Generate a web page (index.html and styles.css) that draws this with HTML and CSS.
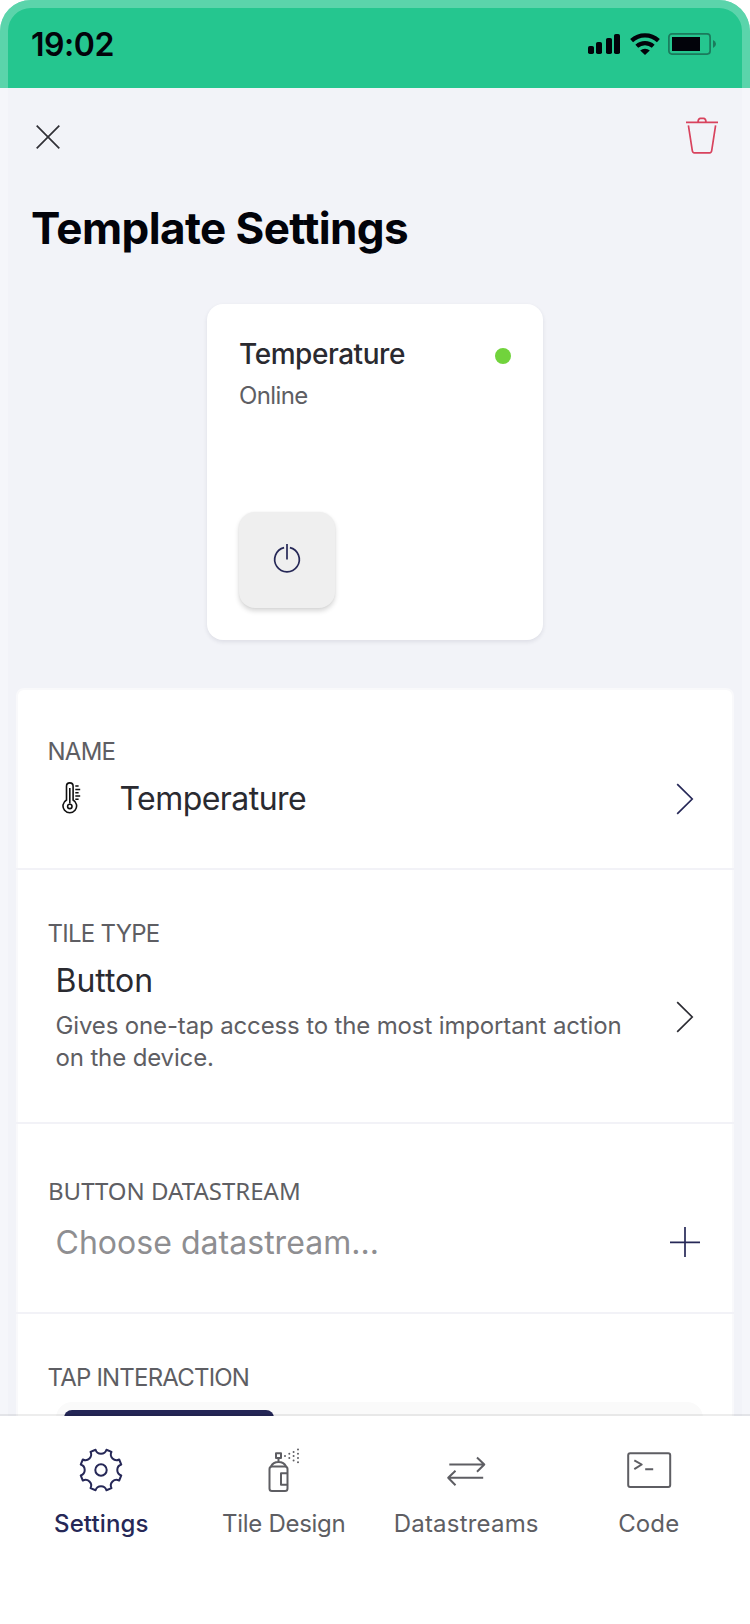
FILE: index.html
```html
<!DOCTYPE html>
<html lang="en">
<head>
<meta charset="utf-8">
<title>Template Settings</title>
<link rel="stylesheet" href="styles.css">
</head>
<body>
<div class="phone">
  <header class="status">
    <span class="time">19:02</span>
    <div class="status-icons">
      <svg width="32" height="24" viewBox="0 0 32 24"><rect y="14" width="6" height="8" rx="1.8"/><rect x="8" y="10" width="6" height="12" rx="1.8"/><rect x="18" y="6" width="6" height="16" rx="1.8"/><rect x="26" y="2" width="6" height="20" rx="1.8"/></svg>
      <svg class="wifi" width="30" height="24" viewBox="0 0 30 24"><path class="arc" d="M1.6 8.6A19.6 19.6 0 0 1 28.4 8.6M6.8 14.2A12.2 12.2 0 0 1 23.2 14.2"/><path d="M15 23L10.2 18.6A7 7 0 0 1 19.8 18.6Z"/></svg>
      <svg class="battery" width="48" height="24" viewBox="0 0 48 24"><rect class="shell" x=".9" y="1.9" width="41.2" height="20.2" rx="3"/><rect x="4" y="5" width="28" height="14"/><path class="nub" d="M45 8Q48 9.5 48 12T45 16Z"/></svg>
    </div>
  </header>

  <main class="content">
    <div class="toolbar">
      <svg class="close" width="24" height="24" viewBox="0 0 24 24"><path d="M.7 .7L23.3 23.3M23.3 .7L.7 23.3"/></svg>
      <svg class="trash" width="34" height="38" viewBox="0 0 34 38"><path d="M1 6.3H33M13 6.1Q13.2 2.3 15.4 2.3H18.6Q20.8 2.3 21 6.1M3.4 9.3L7.3 34.5Q7.6 36.9 9.4 36.9H24.6Q26.4 36.9 26.7 34.5L30.6 9.3"/></svg>
    </div>
    <h1 class="title">Template Settings</h1>

    <section class="tile">
      <div class="tile-head">
        <h2 class="tile-name">Temperature</h2>
        <span class="dot"></span>
      </div>
      <p class="tile-state">Online</p>
      <div class="power">
        <svg width="30" height="32" viewBox="0 0 30 32"><path d="M12.1 3.6A12.3 12.3 0 1 0 17.9 3.6M15 0V15.6"/></svg>
      </div>
    </section>

    <section class="list">
      <div class="row row-name">
        <div class="label">NAME</div>
        <div class="line">
          <svg class="thermo" width="20" height="34" viewBox="0 0 20 34"><path d="M4.5 18V4.2A3.3 3.3 0 0 1 11.1 4.2V18A6.8 6.8 0 1 1 4.5 18Z"/><path d="M7.8 6V21.5"/><circle cx="7.8" cy="24.4" r="2.2"/><path class="ticks" d="M13.3 4H16.6M13.3 7.5H18.2M13.3 10.8H16.6M13.3 14H18.2M13.3 17.3H16.6"/></svg>
          <span class="value">Temperature</span>
          <svg class="chevron navy" width="18" height="32" viewBox="0 0 18 32"><path d="M1.2 1.2L16.2 16L1.2 30.8"/></svg>
        </div>
      </div>
      <div class="row row-type">
        <div class="label">TILE TYPE</div>
        <div class="line">
          <div class="type-text">
            <div class="value type-value">Button</div>
            <p class="desc">Gives one-tap access to the most important action<br>on the device.</p>
          </div>
          <svg class="chevron" width="18" height="32" viewBox="0 0 18 32"><path d="M1.2 1.2L16.2 16L1.2 30.8"/></svg>
        </div>
      </div>
      <div class="row row-stream">
        <div class="label stream-label">BUTTON DATASTREAM</div>
        <div class="line">
          <span class="value placeholder">Choose datastream...</span>
          <svg class="plus" width="32" height="32" viewBox="0 0 32 32"><path d="M1 16.3H31M16 1V31"/></svg>
        </div>
      </div>
      <div class="row row-tap">
        <div class="label tap-label">TAP INTERACTION</div>
        <div class="segments"><div class="segment"></div></div>
      </div>
    </section>
  </main>

  <nav class="tabs">
    <div class="tab active">
      <svg width="48" height="48" viewBox="0 0 48 48"><path d="M18.56 3.72A5.7 5.7 0 0 0 29.44 3.72L34.5 5.81A5.7 5.7 0 0 0 42.19 13.5L44.28 18.56A5.7 5.7 0 0 0 44.28 29.44L42.19 34.5A5.7 5.7 0 0 0 34.5 42.19L29.44 44.28A5.7 5.7 0 0 0 18.56 44.28L13.5 42.19A5.7 5.7 0 0 0 5.81 34.5L3.72 29.44A5.7 5.7 0 0 0 3.72 18.56L5.81 13.5A5.7 5.7 0 0 0 13.5 5.81Z"/><circle cx="24" cy="24" r="5.7"/></svg>
      <span class="tab-label">Settings</span>
    </div>
    <div class="tab">
      <svg width="48" height="48" viewBox="0 0 48 48"><rect x="9.5" y="20.5" width="18" height="24.5" rx="2.5"/><path d="M11 20.5Q13 16 18.5 16T26 20.5M18.5 16V12M27.5 27.2H21V38.8H27.5"/><rect x="16" y="7.3" width="5" height="4.7"/><path class="spray" d="M25 10h0M29.3 7.8h0M29.3 12h0M33.6 6h0M33.6 10h0M33.6 14.5h0M38 3.5h0M38 7.8h0M38 12h0M38 16.2h0"/></svg>
      <span class="tab-label">Tile Design</span>
    </div>
    <div class="tab">
      <svg width="48" height="48" viewBox="0 0 48 48"><path d="M7.3 18.5H42M35 11.5L42.3 18.5L35 25.7M41.2 31.8H6.5M13.5 24.8L6.2 31.8L13.5 39.2"/></svg>
      <span class="tab-label streams">Datastreams</span>
    </div>
    <div class="tab">
      <svg width="48" height="48" viewBox="0 0 48 48"><rect x="3.2" y="7.3" width="42" height="33.7" rx="2"/><path d="M9.3 14.3L16.7 18.5L9.3 23.2M20.2 23.2H28.2"/></svg>
      <span class="tab-label code">Code</span>
    </div>
  </nav>
  <div class="frame"></div>
</div>
</body>
</html>
```
FILE: styles.css
```css
* { box-sizing: border-box; }
body { margin: 0; background: #fff; }
h1, h2, p { margin: 0; }
svg { display: block; flex: none; }

.phone {
  position: relative;
  display: flex;
  flex-direction: column;
  width: 750px;
  height: 1624px;
  overflow: hidden;
  border-radius: 31px 31px 0 0;
  background: #f2f3f8;
  font-family: Inter, "Liberation Sans", sans-serif;
  color: #2a2a30;
}

/* translucent device edge, drawn over the screen but below the tab bar */
.frame {
  position: absolute;
  inset: 0;
  z-index: 1;
  border: 8px solid rgba(255, 255, 255, .25);
  border-radius: 31px 31px 0 0;
}

.status {
  display: flex;
  flex: none;
  justify-content: space-between;
  height: 88px;
  padding: 24px 34px 0 31px;
  background: #25c68f;
  color: #02030a;
}
.time { padding-top: 1px; font-size: 32px; line-height: 40px; font-weight: 600; letter-spacing: -.45px; }
.status-icons { display: flex; padding-top: 8px; }
.status-icons svg { fill: #02030a; }
.wifi { margin-left: 10px; }
.status-icons .arc { fill: none; stroke: #02030a; stroke-width: 4.2; }
.battery { margin-left: 8px; }
.status-icons .shell { fill: none; stroke: #1b7a5c; stroke-width: 1.7; }
.status-icons .nub { fill: #1b7a5c; }

.content { flex: 1; min-height: 0; overflow: hidden; }
.toolbar { display: flex; justify-content: space-between; padding: 28px 31px 0 36px; }
.toolbar path { fill: none; stroke-width: 1.7; }
.close { margin-top: 9px; }
.close path { stroke: #303036; }
.trash path { stroke: #d8425d; }

.title {
  margin: 46px 0 0 31px;
  font-size: 44px;
  line-height: 56px;
  font-weight: 700;
  letter-spacing: -.6px;
  color: #02030a;
}

.tile {
  width: 336px;
  height: 336px;
  margin: 48px auto 0;
  padding: 32px 32px 0;
  border-radius: 16px;
  background: #fff;
  box-shadow: 0 2px 4px rgba(40, 40, 70, .1);
}
.tile-head { display: flex; justify-content: space-between; align-items: center; height: 36px; }
.tile-name { font-size: 28px; line-height: 36px; font-weight: 500; letter-spacing: -.45px; }
.dot { width: 16px; height: 16px; margin-top: 4px; border-radius: 50%; background: #71d33c; }
.tile-state { margin-top: 8px; font-size: 24px; line-height: 32px; letter-spacing: -.6px; color: #5e5e63; }
.power {
  display: flex;
  align-items: center;
  justify-content: center;
  width: 96px;
  height: 96px;
  margin-top: 100px;
  border-radius: 16px;
  background: #efefef;
  box-shadow: 0 3px 5px rgba(0, 0, 0, .16), 0 0 2px rgba(0, 0, 0, .05);
}
.power path { fill: none; stroke: #262857; stroke-width: 1.7; }

.list {
  height: 760px;
  margin: 48px 16px 0;
  border: 2px solid #f9f9fb;
  border-radius: 8px;
  background: #fff;
}
.row { margin: 0 -2px; padding: 0 32px 0 31.5px; border-bottom: 2px solid #f2f2f7; }
.row-name { height: 180px; padding-top: 46px; }
.row-type { height: 254px; padding-top: 48px; }
.row-stream { height: 190px; padding-top: 51px; }
.row-tap { padding-top: 48px; border: 0; }

.label { font-size: 24px; line-height: 32px; letter-spacing: -.75px; color: #5e5e63; }
.stream-label { padding-left: .5px; font-family: "Noto Sans", sans-serif; letter-spacing: 0; }
.tap-label { letter-spacing: -.8px; }
.line { display: flex; align-items: center; }
.value { font-size: 32px; line-height: 40px; letter-spacing: -.55px; }
.row-name .line { margin-top: 11px; padding-left: 14px; }
.thermo { margin-right: 38px; }
.thermo path, .thermo circle { fill: none; stroke: #111; stroke-width: 1.6; }
.thermo .ticks { stroke-width: 1.5; }
.chevron, .plus { margin-left: auto; }
.chevron { margin-right: 8px; }
.chevron path, .plus path { fill: none; stroke: #2c2c33; stroke-width: 1.7; }
.navy { margin-bottom: 1px; }
.navy path, .plus path { stroke: #262857; }
.plus { margin: 0 1px 1px auto; }

.row-type .line { margin-top: 11px; padding-left: 8px; }
.row-type .chevron { margin-bottom: 2px; }
.type-value { letter-spacing: -.05px; }
.desc { margin-top: 9px; font-size: 24px; line-height: 32px; letter-spacing: -.14px; color: #5e5e63; }
.type-text { white-space: nowrap; }
.row-stream .line { margin-top: 15px; padding-left: 8px; }
.placeholder { padding-top: 1px; letter-spacing: .03px; color: #8e8e91; }

.segments { height: 88px; margin: 8px -1px 0 8.5px; padding: 8px; border-radius: 16px; background: #fafafa; }
.segment { width: 210px; height: 72px; border-radius: 8px; background: #242656; }

.tabs {
  position: relative;
  z-index: 2;
  display: grid;
  grid-template-columns: repeat(4, 1fr);
  flex: none;
  height: 210px;
  margin-top: -2px;
  padding: 30px 10px 0;
  border-top: 2px solid rgba(0, 0, 0, .07);
  background: #fff;
  background-clip: padding-box;
  color: #5e5e63;
}
.tab { display: flex; flex-direction: column; align-items: center; gap: 14px; }
.tab svg * { fill: none; stroke: currentColor; stroke-width: 2; stroke-linejoin: round; }
.tab svg .spray { stroke-linecap: round; }
.tab-label { font-size: 24px; line-height: 32px; letter-spacing: -.3px; }
.streams { letter-spacing: .2px; }
.code { letter-spacing: .1px; }
.active { color: #262857; }
.active .tab-label { font-weight: 500; letter-spacing: .1px; }
```
